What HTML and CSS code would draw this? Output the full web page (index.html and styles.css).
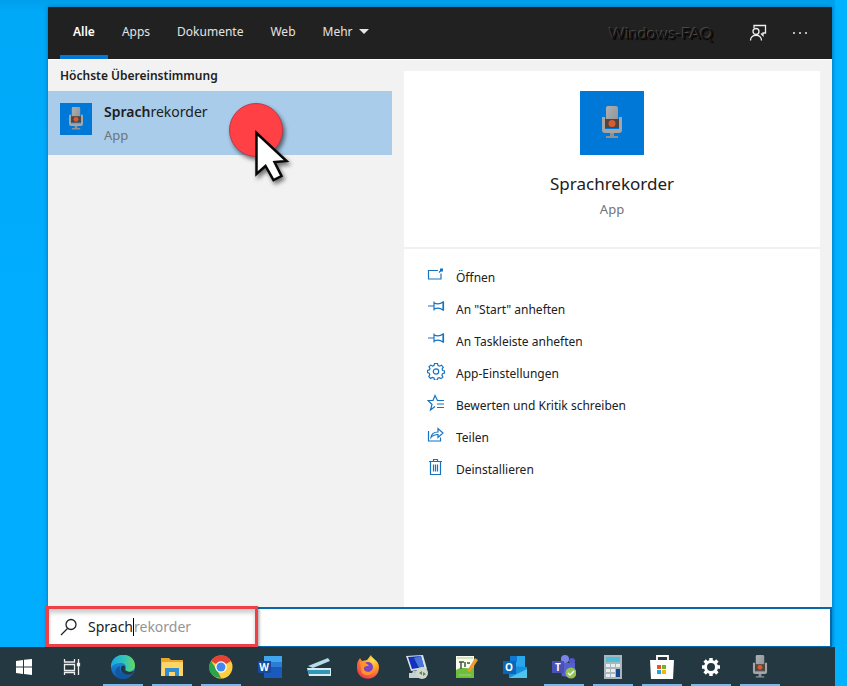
FILE: index.html
```html
<!DOCTYPE html>
<html lang="de">
<head>
<meta charset="utf-8">
<title>Suche</title>
<link rel="stylesheet" href="styles.css">
</head>
<body>
<svg class="defs" aria-hidden="true">
  <defs>
    <linearGradient id="metal" x1="0" x2="1" y2="1"><stop stop-color="#adb0b3"/><stop offset="1" stop-color="#8b8f92"/></linearGradient>
    <linearGradient id="edge-a" x1="0" x2="1"><stop stop-color="#1aa6e8"/><stop offset=".6" stop-color="#35c8b4"/><stop offset="1" stop-color="#68d857"/></linearGradient>
    <linearGradient id="edge-b" x1="0" x2="0" y2="1"><stop stop-color="#1b9de2"/><stop offset="1" stop-color="#1259b0"/></linearGradient>
    <radialGradient id="fox" cx=".7" cy=".2" r=".9"><stop stop-color="#ffe34d"/><stop offset=".45" stop-color="#ff9a2b"/><stop offset="1" stop-color="#f0304f"/></radialGradient>
    <symbol id="mic" viewBox="0 0 20 34">
      <path d="M4 2q0-2 2-2h8q2 0 2 2v20H4z" fill="url(#metal)"/>
      <path d="M0 11h3v12h14V11h3v13q0 3-3 3H3q-3 0-3-3z" fill="#a2a6a9"/>
      <path d="M3 13h14v9H3z" fill="#55433c"/>
      <circle cx="10" cy="17.500" r="3.500" fill="#d65d32"/>
      <path d="M8 27h4v3H8zM4 30h12v2H4z" fill="#8b9298"/>
    </symbol>
    <symbol id="pin" viewBox="0 0 18 18"><path d="M1 8h6M7 3.500v9M7 5q5 2 9-1v8q-4-3-9-1M16.500 3.500v9" fill="none" stroke="currentColor" stroke-width="1.200"/></symbol>
  </defs>
</svg>
<div class="desktop">
  <main class="window">
    <header class="topbar">
      <nav class="tabs">
        <a class="tab active" href="#">Alle</a>
        <a class="tab" href="#">Apps</a>
        <a class="tab" href="#">Dokumente</a>
        <a class="tab" href="#">Web</a>
        <a class="tab" href="#">Mehr <svg width="10" height="6" viewBox="0 0 10 6"><path d="M0 0h10L5 5z" fill="#e6e6e6"/></svg></a>
      </nav>
      <span class="brand">Windows-FAQ</span>
      <button class="tool" aria-label="Feedback"><svg width="18" height="18" viewBox="0 0 18 18" fill="none" stroke="#eee" stroke-width="1.3"><path d="M5 4V1.500h11.500v7.500H14v2.500L12 9.500"/><circle cx="7" cy="7.500" r="3"/><path d="M1.500 16.500c0-7 11-7 11 0"/></svg></button>
      <button class="tool" aria-label="Optionen"><svg width="18" height="18" viewBox="0 0 18 18" fill="#ddd"><circle cx="3" cy="9" r="1.100"/><circle cx="9" cy="9" r="1.100"/><circle cx="15" cy="9" r="1.100"/></svg></button>
    </header>
    <div class="content">
      <section class="results">
        <h2>Höchste Übereinstimmung</h2>
        <a class="result" href="#">
          <span class="tile"><svg width="14" height="24"><use href="#mic"/></svg></span>
          <span class="result-text"><span class="name"><b>Sprach</b>rekorder</span><span class="kind">App</span></span>
          <svg class="pointer" width="66" height="88" viewBox="0 0 66 88">
            <circle cx="31" cy="31" r="26.500" fill="#ff4145" stroke="#b83b50"/>
            <path d="M31.500 34v41l9-8 8 14 8-4-7-14 12-1z" fill="#fff" stroke="#080808" stroke-width="2.500"/>
          </svg>
        </a>
      </section>
      <section class="details">
        <div class="hero">
          <span class="tile large"><svg width="22" height="34"><use href="#mic"/></svg></span>
          <h1>Sprachrekorder</h1>
          <span class="kind">App</span>
        </div>
        <div class="actions">
          <button><svg viewBox="0 0 18 18" fill="none" stroke="currentColor" stroke-width="1.200"><path d="M11 4.500H1.500v8.500h12.500V7.500"/><path d="M12 6.500l2-2"/><path d="M13 2.500h3v3h-3z" fill="currentColor" stroke="none"/></svg>Öffnen</button>
          <button><svg><use href="#pin"/></svg>An "Start" anheften</button>
          <button><svg><use href="#pin"/></svg>An Taskleiste anheften</button>
          <button><svg viewBox="0 0 18 18" fill="none" stroke="currentColor" stroke-width="1.200"><path d="M7.500 1.500h3l.5 2 1.500.7 2-1 1.800 2-1.200 1.800.6 1.500 1.800.5v2l-2 .7-.6 1.500 1 1.900-1.900 1.500-1.700-1-1.500.6-.6 1.800H7.500L7 16l-1.500-.6-1.900 1-1.800-1.800 1-1.900-.6-1.500-1.700-.7V8.500l1.800-.6.7-1.500-1-1.800 1.800-1.500 1.800 1L7 3.500z"/><circle cx="9" cy="9.500" r="2.700"/></svg>App-Einstellungen</button>
          <button><svg viewBox="0 0 18 18" fill="none" stroke="currentColor" stroke-width="1.200"><path d="M17 6.500h-6.500L8 1.500 6 6.500H1l4 4L3.500 16 8 12.500M10 10h7M10 13.500h7"/></svg>Bewerten und Kritik schreiben</button>
          <button><svg viewBox="0 0 18 18" fill="none" stroke="currentColor" stroke-width="1.200"><path d="M1.500 5v10h12v-3.500"/><path d="M4 11.500c.5-4 3-5.500 7-5.500V2.500l5 4.500-5 4.500V8.500c-3 0-5 .5-7 3z"/></svg>Teilen</button>
          <button><svg viewBox="0 0 18 18" fill="none" stroke="currentColor" stroke-width="1.200"><path d="M2 3.500h13M6.500 3.500v-2h4v2M3.500 3.500v13h10v-13M6.500 6.500v7M8.500 6.500v7M10.500 6.500v7"/></svg>Deinstallieren</button>
        </div>
      </section>
    </div>
    <div class="searchbar">
      <label class="search">
        <svg width="18" height="18" viewBox="0 0 18 18" fill="none" stroke="#222" stroke-width="1.300"><circle cx="11" cy="6.500" r="5"/><path d="M7.500 10.500L1 17"/></svg>
        <span class="field"><input type="text" value="Sprach" aria-label="Suchbegriff"><span class="caret"></span><span class="hint">rekorder</span></span>
      </label>
    </div>
  </main>
  <footer class="taskbar">
    <button class="system" aria-label="Start"><svg viewBox="0 0 24 24" fill="#fff"><path d="M4 6l7-1v6.500H4zM12 4.800L20 4v7.500h-8zM4 12.500h7V19l-7-1zM12 12.500h8V20l-8-1z"/></svg></button>
    <button class="system" aria-label="Taskansicht"><svg viewBox="0 0 24 24" fill="none" stroke="#eee" stroke-width="1.300"><path d="M4.500 4v3h10V4M4.500 9.500h10v6h-10zM4.500 20v-2.500h10V20M18.500 4v16"/><path d="M17.500 8.500h2v2h-2z" fill="#fff"/></svg></button>
    <button class="open" aria-label="Edge"><svg viewBox="0 0 24 24"><circle cx="12" cy="12" r="12" fill="url(#edge-b)"/><path d="M0 11C1-4 24-4 24 11c0 6-8 7-10 4 2-2 1-7-4-7-4 0-8 1-10 5z" fill="url(#edge-a)"/><path d="M9 11c-2 6 4 10 12 8-3 4-8 6-13 4-5-3-5-10 1-12z" fill="#1257a4"/><path d="M14 12c-1 3 2 5 6 5l3-1-2 3c-7 2-12-2-11-6 0-2 3-4 4-1z" fill="#233840"/></svg></button>
    <button class="open" aria-label="Explorer"><svg viewBox="0 0 24 24"><path d="M1 3h8l2 2h12v16H1z" fill="#eba72b"/><path d="M2 7h21v14H1z" fill="#ffd56a"/><path d="M5 13h14v8h-4v-4H9v4H5z" fill="#318fd0"/></svg></button>
    <button class="open" aria-label="Chrome"><svg viewBox="0 0 24 24"><circle cx="12" cy="12" r="11.500" fill="#ffcd40"/><path d="M12 12L2 6C7-2 18-2 22 6z" fill="#e44436"/><path d="M2 6l6 9 4 8C1 23-3 13 2 6z" fill="#2ba24c"/><circle cx="12" cy="12" r="5.800" fill="#fff"/><circle cx="12" cy="12" r="4.500" fill="#4389ed"/></svg></button>
    <button aria-label="Word"><svg viewBox="0 0 24 24"><path d="M6 1h18v22H6z" fill="#185abd"/><path d="M6 1h18v6H6z" fill="#41a5ee"/><path d="M6 7h18v5H6z" fill="#2b7cd3"/><path d="M0 6h13v12H0z" fill="#174a9e"/><text class="glyph" x="6" y="16">W</text></svg></button>
    <button aria-label="Scanner"><svg viewBox="0 0 24 24"><path d="M1 11L21 3l2 3L6 13z" fill="#b8dce7"/><path d="M0 13h24v8H2z" fill="#d5edf1"/><path d="M1 15h22v4H1z" fill="#3295b8"/></svg></button>
    <button aria-label="Firefox"><svg viewBox="0 0 24 24"><path d="M2 6l2-3 2 3 5-1 4-5c1 4 8 5 8 12C23 28 0 27 1 12c0-2 0-4 1-6z" fill="url(#fox)"/><circle cx="12" cy="12" r="5" fill="#7b45c4"/><path d="M4 7c4 0 7 1 9 4-3 0-5 0-5 3 0 3 6 5 10 0-1 6-8 8-12 4z" fill="#ff942d"/></svg></button>
    <button aria-label="Remotedesktop"><svg viewBox="0 0 24 24"><path d="M1 1l17-1 4 14-16 2z" fill="#d9e2e5"/><path d="M3 2l13-1 3 11-12 2z" fill="#1231bf"/><path d="M9 3l7-2 3 11-5 1z" fill="#4775d8"/><path d="M8 16h6l2 4H6z" fill="#bac3c7"/><path d="M4 18h13v5H4z" fill="#c6cfd2"/><circle cx="17" cy="18" r="6" fill="#d1d8cd"/><path d="M14 18l3-2v4zM18 17l3 2-3 2" fill="#5b8754"/></svg></button>
    <button aria-label="Editor"><svg viewBox="0 0 24 24"><path d="M2 1h18v22H2z" fill="#fafcef"/><path d="M2 15c6-4 12 0 18-3v11H2z" fill="#6dbe3b"/><path d="M5 7h5M7 7v7M11 7v5M13 8h3" fill="none" stroke="#3f553e" stroke-width="1.500"/><path d="M3 3h16M5 20h12" stroke="#aacb87"/><path d="M13 16l8-13 3 2-8 12z" fill="#ed9a2d"/></svg></button>
    <button aria-label="Outlook"><svg viewBox="0 0 24 24"><path d="M7 1h15v11H7z" fill="#28a8ea"/><path d="M7 1h7v6H7z" fill="#0f78d4"/><path d="M6 11l18 1v11H6z" fill="#1490df"/><path d="M6 23l18-9v9z" fill="#50c2ee"/><path d="M0 6h13v13H0z" fill="#0a66b6"/><text class="glyph" x="6" y="16">O</text></svg></button>
    <button class="open" aria-label="Teams"><svg viewBox="0 0 24 24"><circle cx="13" cy="4" r="4" fill="#7b83eb"/><circle cx="20" cy="6" r="3" fill="#5059c9"/><path d="M7 8h16v8c0 5-7 7-13 5z" fill="#5660ce"/><path d="M0 6h12v12H0z" fill="#4a50b5"/><text class="glyph" x="6" y="16">T</text><circle cx="19" cy="18" r="5.500" fill="#92c353"/><path d="M16 18l2 2 4-4" fill="none" stroke="#fff" stroke-width="1.500"/></svg></button>
    <button class="open" aria-label="Rechner"><svg viewBox="0 0 24 24"><path d="M3 0h18v24H3z" fill="#aab6bc"/><path d="M5 2h14v5H5z" fill="#49c0dc"/><path d="M5 9h4v3H5zM10 9h4v3h-4zM15 9h4v3h-4zM5 14h4v3H5zM10 14h4v3h-4zM5 19h4v3H5zM10 19h4v3h-4z" fill="#e8eef0"/><path d="M15 14h4v8h-4z" fill="#17488b"/></svg></button>
    <button class="open" aria-label="Store"><svg viewBox="0 0 24 24"><path d="M7 6V1h11v5" fill="none" stroke="#fff" stroke-width="1.800"/><path d="M0 5h24l-1 19H1z" fill="#fff"/><path d="M7 10h4v4H7z" fill="#ed5128"/><path d="M12 10h4v4h-4z" fill="#78b51c"/><path d="M7 15h4v4H7z" fill="#19a7e7"/><path d="M12 15h4v4h-4z" fill="#f5b412"/></svg></button>
    <button class="open" aria-label="Einstellungen"><svg viewBox="0 0 24 24" fill="none" stroke="#fff"><circle cx="12" cy="12" r="5.500" stroke-width="3"/><path d="M12 3v3M12 18v3M3 12h3M18 12h3M5.600 5.600l2.200 2.200M16.200 16.200l2.200 2.200M18.400 5.600l-2.200 2.200M7.800 16.200l-2.200 2.200" stroke-width="3.500"/></svg></button>
    <button class="open" aria-label="Sprachrekorder"><svg><use href="#mic"/></svg></button>
  </footer>
</div>
</body>
</html>
```
FILE: styles.css
```css
* { box-sizing: border-box; }
body {
  margin: 0;
  background: #00b2ff;
  font: 12px/20px "Noto Sans", "Open Sans", sans-serif;
  color: #202020;
}
button, input { font: inherit; color: inherit; border: 0; background: none; padding: 0; }
a { color: inherit; text-decoration: none; }
h1, h2 { margin: 0; }
.defs { position: absolute; width: 0; height: 0; }
.desktop {
  display: flex;
  flex-direction: column;
  min-height: 100vh;
  margin-right: 12px;
  padding-top: 7px;
  background: linear-gradient(#009fec, #00a9f8 12px, #00adff 50%);
}
.window {
  flex: 1;
  display: flex;
  flex-direction: column;
  margin: 0 3px 0 48px;
  background: #f2f2f2;
  box-shadow: 0 0 4px #006aaa;
}
.topbar {
  display: flex;
  align-items: center;
  height: 52px;
  padding: 0 23px 0 12px;
  background: #212121;
  color: #e4e4e4;
}
.tabs { display: flex; flex: 1; gap: 1px; align-self: stretch; }
.tab { display: flex; align-items: center; gap: 6px; padding: 0 13px; border-bottom: 4px solid transparent; border-top: 2px solid transparent; }
.tab.active { font-weight: 600; color: #fff; border-bottom-color: #0078d7; }
.brand {
  margin-right: 36px;
  font: 16px/24px "Lato", sans-serif;
  color: #131313;
  text-shadow: -1px -1px 0 #484848, 1px 1px 1px #000;
}
.tool { display: flex; }
.tool + .tool { margin-left: 24px; }
.content { flex: 1; display: flex; gap: 12px; padding-right: 12px; border-top: 1px solid #fff; }
.results { flex: 344; }
.results h2 { padding: 6px 12px 5px; font-size: 12px; line-height: 20px; font-weight: 600; }
.result {
  position: relative;
  display: flex;
  align-items: flex-start;
  gap: 12px;
  height: 64px;
  padding: 12px;
  background: #a8cce9;
}
.tile {
  display: grid;
  place-items: center;
  width: 32px;
  height: 32px;
  background: #0078d7;
}
.tile.large { width: 64px; height: 64px; }
.result-text { display: flex; flex-direction: column; gap: 3px; margin-top: -1px; font-size: 14px; }
.name b { font-weight: 600; }
.kind { font-size: 13px; color: #6c747b; }
.pointer { position: absolute; left: 177px; top: 8px; filter: drop-shadow(2px 3px 2px #0008); }
.details { flex: 416; display: flex; flex-direction: column; margin-top: 11px; background: #fff; }
.hero {
  display: flex;
  flex-direction: column;
  align-items: center;
  height: 178px;
  padding-top: 20px;
  border-bottom: 2px solid #f0f0f0;
}
.hero h1 { margin: 17px 0 3px; font-size: 17px; line-height: 24px; font-weight: 400; }
.actions { display: flex; flex-direction: column; padding: 13px 23px; }
.actions button { display: flex; align-items: center; gap: 11px; height: 32px; text-align: left; }
.actions svg { width: 18px; height: 18px; margin-bottom: 6px; color: #1673c2; }
.searchbar {
  display: flex;
  height: 40px;
  background: #fff;
  border: solid #0868ac;
  border-width: 2px 2px 1px 0;
}
.search {
  display: flex;
  align-items: center;
  gap: 10px;
  width: 212px;
  margin: -3px 0 -1px -2px;
  padding: 1px 0 0 11px;
  border: 3px solid #ed4148;
  background: #fff;
  box-shadow: 1px 2px 3px #0006, inset 0 4px 4px #0003;
}
.field { display: flex; align-items: center; font-size: 14px; }
.field input { width: 45px; height: 20px; outline: 0; }
.caret { width: 1px; height: 18px; background: #000; }
.hint { color: #949494; }
.taskbar { display: flex; height: 39px; background: #233840; }
.taskbar button { display: grid; place-items: center; width: 49px; }
.taskbar .system { width: 48px; }
.taskbar .system + .open { margin-left: 2px; }
.taskbar button.open { background: linear-gradient(#76b9ed, #76b9ed) center bottom / 40px 2px no-repeat; }
.taskbar svg { width: 24px; height: 24px; }
.glyph { font: 700 10px "Open Sans", sans-serif; fill: #fff; text-anchor: middle; }
```
